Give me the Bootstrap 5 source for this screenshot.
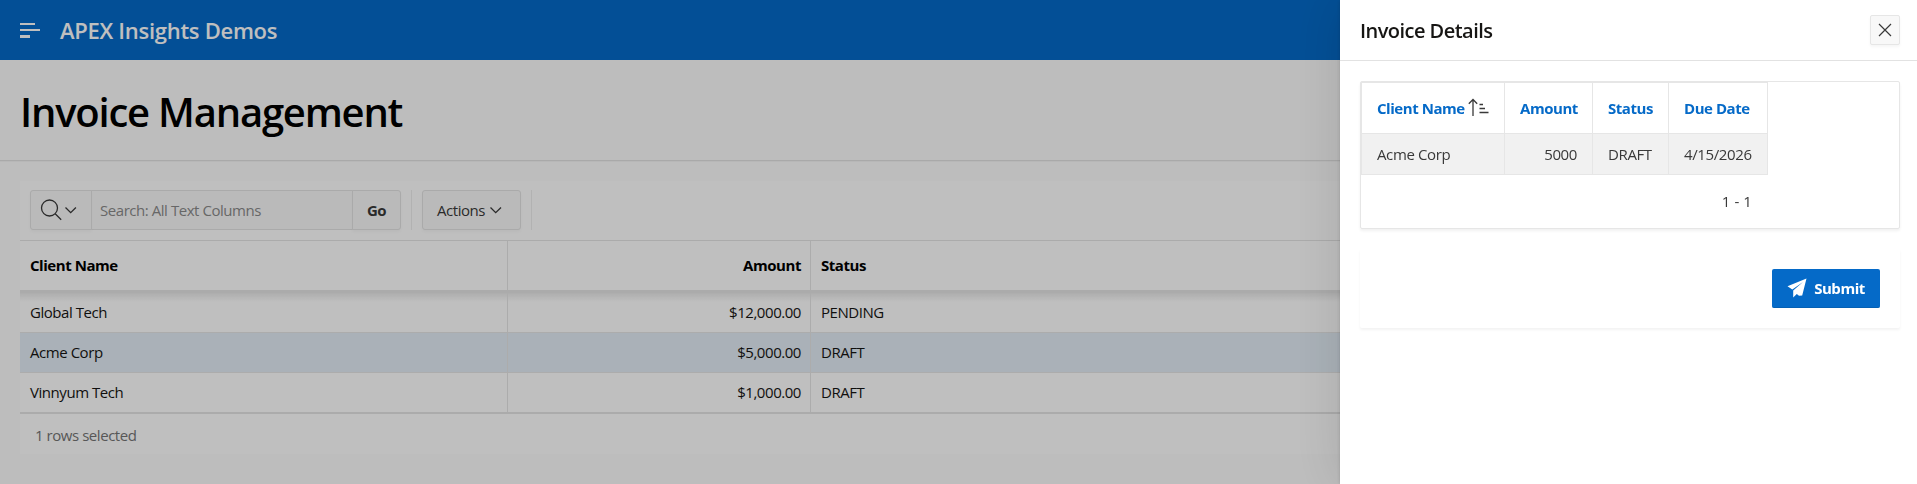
<!DOCTYPE html>
<html lang="en">
<head>
    <meta charset="UTF-8">
    <meta name="viewport" content="width=device-width, initial-scale=1.0">
    <link href="https://cdn.jsdelivr.net/npm/bootstrap@5.3.0/dist/css/bootstrap.min.css" rel="stylesheet">
    <script src="https://cdn.jsdelivr.net/npm/bootstrap@5.3.0/dist/js/bootstrap.bundle.min.js"></script>
    <title>Invoice Management</title>
    <style>
        body {
            font-family: "Open Sans", "Noto Sans", sans-serif;
            font-size: 15px;
            letter-spacing: -.45px;
            line-height: 20px;
            background: #fdfdfd;
            color: #161513;
            overflow: hidden;
        }
        svg { display: block; flex: none; }

        .app-header { height: 60px; padding: 0 20px; gap: 20px; background: #056ac8; }
        .app-title { font-size: 22px; font-weight: 600; letter-spacing: -.28px; }
        .title-bar { height: 101px; padding: 4px 20px 0; border-bottom: 1px solid #e2e2e2; box-shadow: 0 1px 1px rgba(0,0,0,.03); }
        .title-bar h1 { font-size: 40px; font-weight: 600; letter-spacing: -1.22px; color: #000; }

        /* Interactive grid */
        .ig-region { margin: 20px 20px 0; background: #fff; }
        .ig-toolbar { padding: 9px 10px 10px; }
        .ig-toolbar .btn, .ig-toolbar .form-control {
            height: 40px;
            font-size: 15px;
            letter-spacing: -.45px;
            line-height: 20px;
            border-color: #e3e3e3;
            border-radius: 3px;
        }
        .ig-toolbar .btn { background: #f8f8f8; color: #393939; box-shadow: 0 2px 3px rgba(0,0,0,.03); }
        .ig-toolbar .form-control { background: #f9f9f9; padding: 0 8px; }
        .ig-toolbar .form-control::placeholder { color: #8a8a8a; opacity: 1; }
        .ig-search { width: 371px; }
        .ig-divider { width: 1px; height: 40px; background: #eee; margin: 0 10px; }
        .ig-grid { table-layout: fixed; border-collapse: separate; border-spacing: 0; border-top: 1px solid #e4e4e4; border-bottom: 2px solid #e4e4e4; color: #161513; }
        .ig-grid > :not(caption) > * > * { padding: 0 9px 2px 10px; height: 40px; border: 0 solid #e6e6e6; border-width: 0 1px 1px 0; vertical-align: middle; }
        .ig-grid > thead > tr > th { height: 49px; border-bottom: 0; color: #000; }
        .ig-grid > tbody > tr:last-child > td { border-bottom: 0; height: 39px; }
        .ig-grid > tbody > tr.is-selected > td { background: #e3edf6; }
        .ig-grid > tbody > tr.ig-shade > td { height: 3px; border: 0; background: #e4e4e4; line-height: 0; padding: 0; }
        .ig-grid > tbody > tr.ig-first > td { height: 40px; background: linear-gradient(rgba(0,0,0,.09), transparent 9px); }
        .ig-footer { height: 40px; padding: 1px 15px 0; color: #757575; }

        /* Drawer */
        .offcanvas-backdrop.show { opacity: .25; }
        .offcanvas.invoice-drawer {
            --bs-offcanvas-width: 577px;
            border: 0;
            color: #393939;
            box-shadow: 0 0 50px rgba(0,0,0,.13), 0 0 4px rgba(0,0,0,.16);
        }
        .drawer-header { height: 61px; padding: 0 17px 0 20px; border-bottom: 1px solid #e2e2e2; }
        .drawer-header h2 { font-size: 20px; font-weight: 600; letter-spacing: -.54px; color: #161513; padding-top: 2px; }
        .btn-dismiss { width: 30px; height: 30px; background: #f8f8f8; border: 1px solid #e6e6e6; border-radius: 2px; box-shadow: 0 2px 3px rgba(0,0,0,.04); }
        .detail-region { height: 148px; border: 1px solid #e6e6e6; border-radius: 2px; box-shadow: 0 2px 3px rgba(0,0,0,.06); }
        .detail-table { table-layout: fixed; width: 407px; border-collapse: separate; border-spacing: 0; border-top: 1px solid #e6e6e6; border-left: 1px solid #e6e6e6; }
        .detail-table th, .detail-table td { padding: 0 15px; border-right: 1px solid #e6e6e6; border-bottom: 1px solid #e6e6e6; white-space: nowrap; }
        .detail-table th { height: 51px; color: #056ac8; }
        .detail-table td { height: 41px; background: #f1f1f1; letter-spacing: -.38px; }
        .detail-pager { width: 407px; padding: 16px 16px 0 0; letter-spacing: .1px; }
        .button-region { height: 79px; padding: 20px; margin-top: 20px; border-radius: 2px; box-shadow: 0 2px 3px rgba(0,0,0,.05); }
        .btn-submit { width: 108px; height: 39px; gap: 7px; font-size: 15px; letter-spacing: -.45px; background: #056ac8; border: 0; border-bottom: 1px solid #0560b4; border-radius: 2px; }
    </style>
</head>
<body>

    <!-- Header -->
    <header class="app-header d-flex align-items-center">
        <svg width="20" height="16" viewBox="0 0 20 16" fill="#fff"><path d="M0 1h15v2H0zM0 7h20v2H0zM0 13h10v3H0z"/></svg>
        <span class="app-title text-white">APEX Insights Demos</span>
    </header>

    <div class="title-bar d-flex align-items-center">
        <h1 class="m-0">Invoice Management</h1>
    </div>

    <!-- Invoice grid -->
    <main class="ig-region">
        <div class="ig-toolbar d-flex align-items-center">
            <div class="input-group ig-search flex-nowrap">
                <button type="button" class="btn d-flex align-items-center p-0" style="width:62px" aria-label="Search column">
                    <svg width="61" height="38" viewBox="0 0 61 38" fill="none" stroke="#393939" stroke-width="1.3"><circle cx="18.5" cy="17" r="8"/><path d="M24.2 22.7l6 6M34.5 16.5l5.2 5.2 5.2-5.2"/></svg>
                </button>
                <input type="text" class="form-control" placeholder="Search: All Text Columns">
                <button type="button" class="btn fw-bold p-0" style="width:49px">Go</button>
            </div>
            <span class="ig-divider"></span>
            <button type="button" class="btn d-flex align-items-center gap-1" style="width:99px;padding:0 14px">
                Actions
                <svg width="14" height="10" viewBox="0 0 14 10" fill="none" stroke="#393939" stroke-width="1.3"><path d="M1.5 2.5l5.2 5.2L12 2.5"/></svg>
            </button>
            <span class="ig-divider"></span>
        </div>

        <table class="table ig-grid m-0">
            <colgroup>
                <col style="width:488px">
                <col style="width:303px">
                <col>
            </colgroup>
            <thead>
                <tr>
                    <th>Client Name</th>
                    <th class="text-end">Amount</th>
                    <th>Status</th>
                </tr>
            </thead>
            <tbody>
                <tr class="ig-shade"><td colspan="3"></td></tr>
                <tr class="ig-first">
                    <td>Global Tech</td>
                    <td class="text-end">$12,000.00</td>
                    <td>PENDING</td>
                </tr>
                <tr class="is-selected">
                    <td>Acme Corp</td>
                    <td class="text-end">$5,000.00</td>
                    <td>DRAFT</td>
                </tr>
                <tr>
                    <td>Vinnyum Tech</td>
                    <td class="text-end">$1,000.00</td>
                    <td>DRAFT</td>
                </tr>
            </tbody>
        </table>
        <div class="ig-footer d-flex align-items-center">1 rows selected</div>
    </main>

    <div class="offcanvas-backdrop show"></div>

    <!-- Invoice details drawer -->
    <aside class="offcanvas offcanvas-end show invoice-drawer" data-bs-backdrop="false" tabindex="-1" aria-labelledby="drawerTitle">
        <div class="drawer-header d-flex align-items-center justify-content-between">
            <h2 class="m-0" id="drawerTitle">Invoice Details</h2>
            <button type="button" class="btn-dismiss d-flex align-items-center justify-content-center p-0" aria-label="Close">
                <svg width="14" height="14" viewBox="0 0 14 14" fill="none" stroke="#393939" stroke-width="1.2"><path d="M1 1l12 12M13 1L1 13"/></svg>
            </button>
        </div>
        <div style="padding:20px 17px 0 20px">
            <section class="detail-region">
                <table class="detail-table">
                    <colgroup>
                        <col style="width:143px">
                        <col style="width:88px">
                        <col style="width:76px">
                        <col style="width:99px">
                    </colgroup>
                    <thead>
                        <tr>
                            <th>
                                <span class="d-flex align-items-center">Client Name
                                    <svg width="22" height="20" viewBox="0 0 22 20" fill="none" stroke="#393939" stroke-width="1.3" style="margin-left:2px"><path d="M6 18V1.5M1.8 5.7L6 1.5l4.2 4.2M12.5 6.5h3.5M12.5 10.5h5.5M12.5 14.5h9"/></svg>
                                </span>
                            </th>
                            <th class="text-end">Amount</th>
                            <th>Status</th>
                            <th>Due Date</th>
                        </tr>
                    </thead>
                    <tbody>
                        <tr>
                            <td>Acme Corp</td>
                            <td class="text-end">5000</td>
                            <td>DRAFT</td>
                            <td>4/15/2026</td>
                        </tr>
                    </tbody>
                </table>
                <div class="detail-pager text-end">1 - 1</div>
            </section>
            <section class="button-region d-flex justify-content-end">
                <button type="button" class="btn btn-primary btn-submit d-flex align-items-center justify-content-center fw-bold p-0">
                    <svg width="20" height="20" viewBox="0 0 20 20" fill="#fff"><path d="M19.5 .5L.5 8.2l4.8 3.2L16 4 6.2 12.6V19.5l3.6-3.4 2.2 1.7 3.2-.2z"/></svg>
                    Submit
                </button>
            </section>
        </div>
    </aside>

</body>
</html>
